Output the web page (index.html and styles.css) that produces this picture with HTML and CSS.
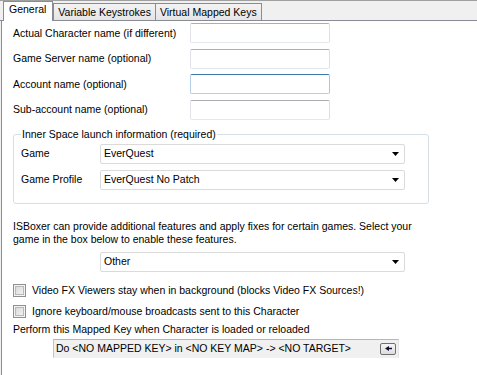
FILE: index.html
```html
<!DOCTYPE html>
<html>
<head>
<meta charset="utf-8">
<link rel="stylesheet" href="styles.css">
</head>
<body>
<div class="window">
  <div class="tabstrip">
    <div class="tab active">General</div>
    <div class="tab first">Variable Keystrokes</div>
    <div class="tab">Virtual Mapped Keys</div>
  </div>
  <div class="page">
    <div class="fields">
      <div class="label">Actual Character name (if different)</div>
      <div class="textbox"></div>
      <div class="label">Game Server name (optional)</div>
      <div class="textbox"></div>
      <div class="label">Account name (optional)</div>
      <div class="textbox focused"></div>
      <div class="label">Sub-account name (optional)</div>
      <div class="textbox"></div>
    </div>

    <fieldset class="group">
      <legend>Inner Space launch information (required)</legend>
      <div class="group-grid">
        <div class="glabel">Game</div>
        <div class="combo"><span>EverQuest</span><svg class="arrow" width="7" height="4" viewBox="0 0 7 4"><polygon points="0,0 7,0 3.5,4" fill="#000"/></svg></div>
        <div class="glabel">Game Profile</div>
        <div class="combo"><span>EverQuest No Patch</span><svg class="arrow" width="7" height="4" viewBox="0 0 7 4"><polygon points="0,0 7,0 3.5,4" fill="#000"/></svg></div>
      </div>
    </fieldset>

    <p class="info">ISBoxer can provide additional features and apply fixes for certain games. Select your game in the box below to enable these features.</p>

    <div class="combo other"><span>Other</span><svg class="arrow" width="7" height="4" viewBox="0 0 7 4"><polygon points="0,0 7,0 3.5,4" fill="#000"/></svg></div>

    <div class="check first-check"><span class="box"></span><span>Video FX Viewers stay when in background (blocks Video FX Sources!)</span></div>
    <div class="check second-check"><span class="box"></span><span>Ignore keyboard/mouse broadcasts sent to this Character</span></div>

    <div class="perform">Perform this Mapped Key when Character is loaded or reloaded</div>
    <div class="mapped">
      <span>Do &lt;NO MAPPED KEY&gt; in &lt;NO KEY MAP&gt; -&gt; &lt;NO TARGET&gt;</span>
      <span class="mini-btn"><svg width="7" height="5" viewBox="0 0 7 5"><polygon points="0,2.5 4,0 4,1.7 7,1.7 7,3.3 4,3.3 4,5" fill="#101030"/></svg></span>
    </div>
  </div>
</div>
</body>
</html>
```

FILE: styles.css
```css
* { box-sizing: border-box; }
html, body { margin: 0; padding: 0; }
body {
  width: 477px;
  height: 375px;
  overflow: hidden;
  background: #f0f0f0;
  font-family: "Liberation Sans", Arial, sans-serif;
  font-size: 10.5px;
  color: #000;
}
.window {
  display: flex;
  flex-direction: column;
  height: 375px;
  border-top: 1px solid #a0a0a0;
}
.tabstrip {
  display: flex;
  align-items: flex-end;
  height: 20px;
  padding-left: 3px;
  background: #f0f0f0;
  border-bottom: 1px solid #898c95;
}
.tab {
  height: 17px;
  padding: 2px 4px 0 4px;
  border: 1px solid #898c95;
  border-bottom: none;
  background: linear-gradient(#f3f3f3, #e5e5e5);
  line-height: 13px;
  margin-left: -1px;
  white-space: nowrap;
}
.tab.first { margin-left: 0; }
.tab.active {
  height: 20px;
  margin-bottom: -1px;
  margin-left: 0;
  padding: 1px 6px 0 5px;
  background: #fff;
  position: relative;
  z-index: 1;
  border-color: #898c95;
}
.page {
  flex: 1;
  margin-left: 1px;
  border-left: 1px solid #898c95;
  background: #fff;
  padding: 2px 0 0 11px;
}
.fields {
  display: grid;
  grid-template-columns: 177px 140px;
  grid-auto-rows: 20px;
  row-gap: 5.67px;
  align-items: center;
}
.label { white-space: nowrap; line-height: 13px; }
.textbox {
  height: 20px;
  background: #fff;
  border: 1px solid;
  border-color: #abadb3 #dbdfe6 #e3e9ef #e2e3ea;
  border-radius: 2px;
}
.textbox.focused {
  border-color: #3d7bad #a4c9e3 #b5cfe7 #b5cfe7;
}
.group {
  margin: 8px 0 0 0;
  width: 416px;
  border: 1px solid #d5dfe5;
  border-radius: 3px;
  padding: 3px 22px 13px 7px;
}
.group legend {
  padding: 0 1px;
  line-height: 13px;
}
.group-grid {
  display: grid;
  grid-template-columns: 79px 305px;
  grid-auto-rows: 20px;
  row-gap: 6px;
}
.glabel { padding-top: 3px; line-height: 13px; white-space: nowrap; }
.combo {
  display: flex;
  align-items: center;
  justify-content: space-between;
  height: 20px;
  width: 305px;
  background: #fff;
  border: 1px solid #dadada;
  border-radius: 2px;
  padding: 0 5px 0 3px;
  line-height: 13px;
}
.combo .arrow { display: block; margin-top: 1px; }
.info {
  margin: 16px 0 0 0;
  line-height: 13px;
  width: 420px;
}
.combo.other { margin: 6px 0 0 87px; }
.check {
  display: flex;
  align-items: center;
  gap: 6px;
  height: 13px;
  white-space: nowrap;
}
.first-check { margin-top: 12px; }
.second-check { margin-top: 8px; }
.box {
  width: 13px;
  height: 13px;
  border: 1px solid #8f8f8f;
  background: linear-gradient(135deg, #d4d4d4, #f7f7f7);
  box-shadow: inset 0 0 0 1px #f4f4f4, inset 0 0 0 2px #b8b8b8;
  flex: none;
}
.perform {
  margin-top: 5px;
  line-height: 13px;
  white-space: nowrap;
}
.mapped {
  margin: 3px 0 0 40px;
  width: 346px;
  height: 19px;
  display: flex;
  align-items: center;
  justify-content: space-between;
  background: #f0f0f0;
  border: 1px solid;
  border-color: #a9b8ca #e3e3e3 #f0f0f0 #c3c3c3;
  padding: 0 2px 0 2px;
  line-height: 13px;
  white-space: nowrap;
}
.mini-btn {
  width: 16px;
  height: 12px;
  border: 1px solid #707070;
  border-radius: 2px;
  background: linear-gradient(#f6f6f6, #dddddd);
  display: flex;
  align-items: center;
  justify-content: center;
  margin-top: 1px;
}
.mini-btn svg { display: block; }
```
